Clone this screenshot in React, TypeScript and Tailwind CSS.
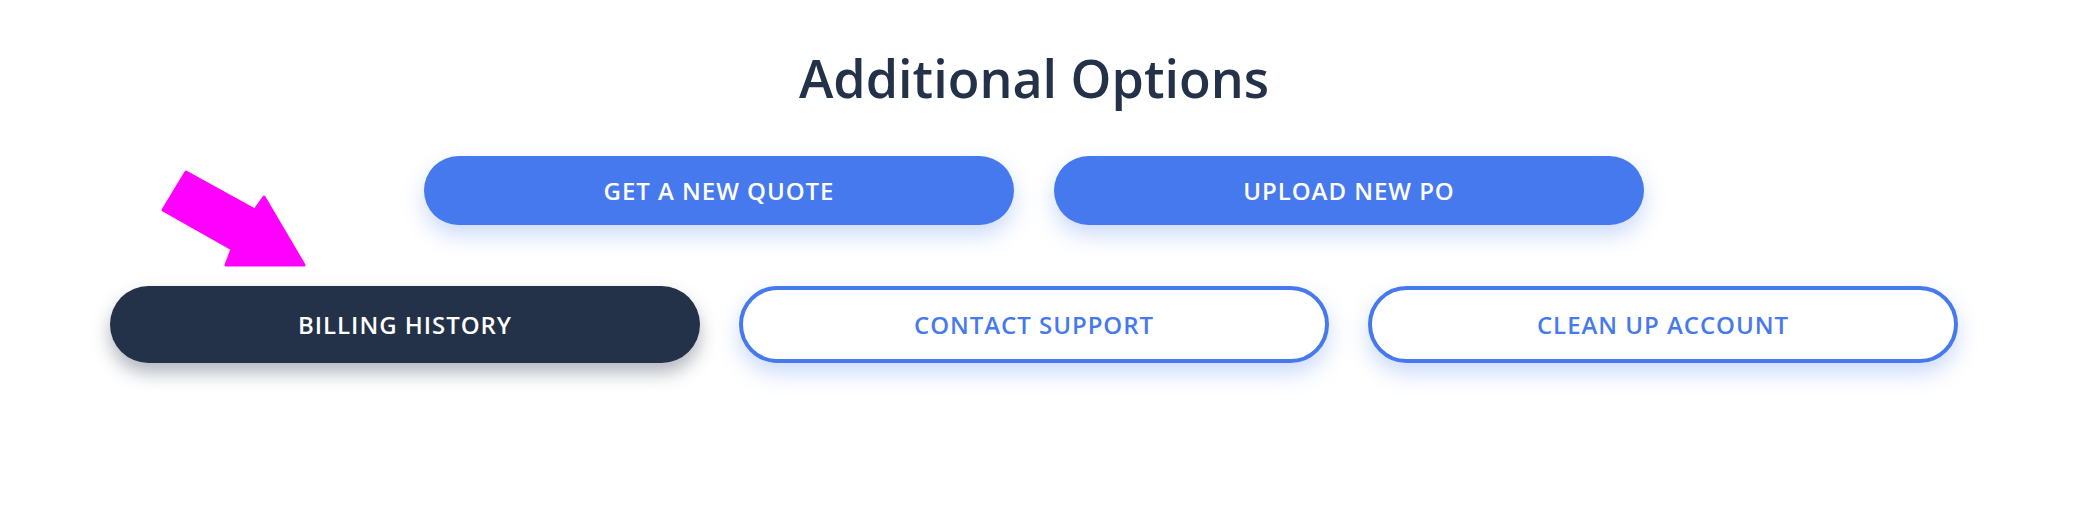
import React from "react";

const font = { fontFamily: '"Open Sans", "Noto Sans", sans-serif' };

function PillButton({ label, variant }: { label: string; variant: "blue" | "navy" | "outline" }) {
  const styles = {
    blue: "h-[69px] bg-[#4679ed] text-white shadow-[0_10px_22px_rgba(70,121,237,0.28)]",
    navy: "h-[77px] bg-[#233249] text-white shadow-[0_10px_18px_rgba(35,50,73,0.35)]",
    outline:
      "h-[77px] bg-white text-[#4679ed] border-[4px] border-[#4679ed] shadow-[0_10px_22px_rgba(70,121,237,0.28)]",
  }[variant];
  return (
    <button
      className={`w-[590px] rounded-full flex items-center justify-center text-[24px] font-semibold tracking-[0.04em] ${styles}`}
      style={font}
    >
      {label}
    </button>
  );
}

export default function App() {
  return (
    <div className="relative w-[2078px] h-[506px] bg-white overflow-hidden" style={font}>
      {/* annotation arrow */}
      <svg className="absolute left-[160px] top-[168px]" width="150" height="100" viewBox="0 0 150 100">
        <polygon
          points="26,4 3,42 72,81 66,97 144,97 104,29 95,42"
          fill="#ff00ff"
          stroke="#ff00ff"
          strokeWidth="3"
          strokeLinejoin="round"
        />
      </svg>

      <div className="ml-[110px] w-[1848px] flex flex-col items-center pt-[52px]">
        <h1 className="text-[52px] leading-none font-semibold text-[#233249]">Additional Options</h1>
        <div className="flex gap-[40px] mt-[52px]">
          <PillButton label="GET A NEW QUOTE" variant="blue" />
          <PillButton label="UPLOAD NEW PO" variant="blue" />
        </div>
        <div className="flex gap-[39px] mt-[61px]">
          <PillButton label="BILLING HISTORY" variant="navy" />
          <PillButton label="CONTACT SUPPORT" variant="outline" />
          <PillButton label="CLEAN UP ACCOUNT" variant="outline" />
        </div>
      </div>
    </div>
  );
}
